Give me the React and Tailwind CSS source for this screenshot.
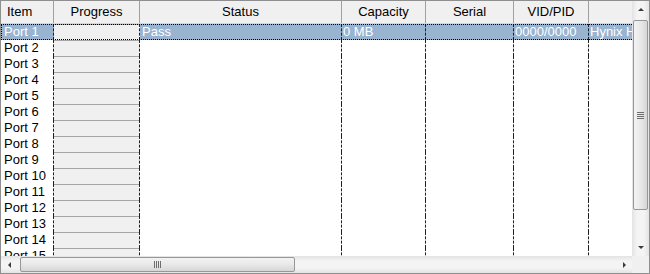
import React from 'react';

const cols = [
  { key: 'item', label: 'Item', w: 'w-[53px]', align: 'justify-start pl-[6px]' },
  { key: 'progress', label: 'Progress', w: 'w-[86px]', align: 'justify-center' },
  { key: 'status', label: 'Status', w: 'w-[202px]', align: 'justify-center' },
  { key: 'capacity', label: 'Capacity', w: 'w-[84px]', align: 'justify-center' },
  { key: 'serial', label: 'Serial', w: 'w-[88px]', align: 'justify-center' },
  { key: 'vid', label: 'VID/PID', w: 'w-[75px]', align: 'justify-center' },
  { key: 'model', label: '', w: 'w-[120px]', align: 'justify-center' },
];

const rows = Array.from({ length: 15 }, (_, i) =>
  i === 0
    ? { item: 'Port 1', status: 'Pass', capacity: '0 MB', serial: '', vid: '0000/0000', model: 'Hynix H' }
    : { item: `Port ${i + 1}`, status: '', capacity: '', serial: '', vid: '', model: '' }
);

function Header() {
  return (
    <div className="flex h-[23px] shrink-0 bg-[#f0f0f0] border-b border-[#d5d5d5]">
      {cols.map((c) => (
        <div
          key={c.key}
          className={`${c.w} shrink-0 flex items-center ${c.align} border-r border-[#a0a0a0] text-[13px] text-black`}
        >
          {c.label}
        </div>
      ))}
    </div>
  );
}

function Row({ r, selected }) {
  const txt = selected ? 'text-white' : 'text-black';
  const bg = selected ? 'bg-[#99b4d1]' : 'bg-white';
  return (
    <div className="relative flex h-[16px] shrink-0 leading-[16px] text-[13px]">
      <div className={`w-[53px] shrink-0 pl-[3px] border-r border-dashed border-[#202020] whitespace-nowrap overflow-hidden ${bg} ${txt}`}>
        {r.item}
      </div>
      <div className="w-[86px] shrink-0 border-r border-dashed border-[#202020]">
        <div className="h-full bg-[#f0f0f0] border-t border-[#a5a5a5]" />
      </div>
      <div className={`w-[202px] shrink-0 pl-[2px] border-r border-dashed border-[#202020] ${bg} ${txt}`}>{r.status}</div>
      <div className={`w-[84px] shrink-0 pl-[1px] border-r border-dashed border-[#202020] ${bg} ${txt}`}>{r.capacity}</div>
      <div className={`w-[88px] shrink-0 pl-[1px] border-r border-dashed border-[#202020] ${bg} ${txt}`}>{r.serial}</div>
      <div className={`w-[75px] shrink-0 pl-[1px] border-r border-dashed border-[#202020] ${bg} ${txt}`}>{r.vid}</div>
      <div className={`w-[120px] shrink-0 pl-[1px] whitespace-nowrap overflow-hidden ${bg} ${txt}`}>{r.model}</div>
      {selected && <div className="absolute inset-0 right-[-100px] border border-dotted border-black pointer-events-none" />}
    </div>
  );
}

function Arrow({ dir }) {
  const pts = {
    up: '1,5 4,2 7,5',
    down: '1,2 4,5 7,2',
    left: '5,1 2,4 5,7',
    right: '3,1 6,4 3,7',
  }[dir];
  return (
    <svg width="8" height="8" viewBox="0 0 8 8">
      <polygon points={pts} fill="#3c3c3c" />
    </svg>
  );
}

function VScroll() {
  return (
    <div className="w-[17px] shrink-0 flex flex-col bg-[linear-gradient(to_right,#e3e3e3,#f4f4f4_30%,#f4f4f4_70%,#e3e3e3)]">
      <div className="h-[17px] flex items-center justify-center"><Arrow dir="up" /></div>
      <div className="flex-1 flex flex-col px-[1px] pt-[2px]">
        <div className="h-[190px] rounded-[2px] border border-[#979797] bg-[linear-gradient(to_right,#f3f3f3,#e8e8e8_50%,#d6d6d6)] flex items-center justify-center">
          <div className="flex flex-col gap-[1px]">
            {[0, 1, 2, 3].map((i) => (
              <div key={i} className="w-[7px] h-[1px] bg-[#6e6e6e]" />
            ))}
          </div>
        </div>
      </div>
      <div className="h-[17px] flex items-center justify-center"><Arrow dir="down" /></div>
    </div>
  );
}

function HScroll() {
  return (
    <div className="flex h-[17px] shrink-0">
      <div className="flex-1 flex bg-[linear-gradient(to_bottom,#e3e3e3,#f4f4f4_30%,#f4f4f4_70%,#e3e3e3)]">
        <div className="w-[17px] flex items-center justify-center"><Arrow dir="left" /></div>
        <div className="flex-1 flex py-[1px] pl-[2px]">
          <div className="w-[275px] rounded-[2px] border border-[#979797] bg-[linear-gradient(to_bottom,#f3f3f3,#e8e8e8_50%,#d6d6d6)] flex items-center justify-center">
            <div className="flex gap-[1px]">
              {[0, 1, 2, 3].map((i) => (
                <div key={i} className="w-[1px] h-[7px] bg-[#6e6e6e]" />
              ))}
            </div>
          </div>
        </div>
        <div className="w-[17px] flex items-center justify-center"><Arrow dir="right" /></div>
      </div>
      <div className="w-[17px] bg-[#f0f0f0]" />
    </div>
  );
}

export default function App() {
  return (
    <div className="w-[650px] h-[274px] border border-[#8f8f8f] bg-white flex flex-col overflow-hidden font-['Liberation_Sans',Arial,sans-serif]">
      <div className="flex flex-1 min-h-0">
        <div className="w-[631px] shrink-0 flex flex-col overflow-hidden">
          <Header />
          <div className="flex flex-col">
            {rows.map((r, i) => (
              <Row key={i} r={r} selected={i === 0} />
            ))}
          </div>
        </div>
        <VScroll />
      </div>
      <HScroll />
    </div>
  );
}
